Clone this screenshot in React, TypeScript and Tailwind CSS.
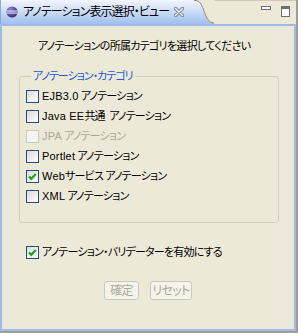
import React from 'react'

const font = "font-['Liberation_Sans','Noto_Sans_CJK_JP',sans-serif] [font-feature-settings:'palt']"

const Check = ({ checked = false, disabled = false }: { checked?: boolean; disabled?: boolean }) => (
  <span
    className={
      disabled
        ? 'w-[13px] h-[13px] shrink-0 border border-[#cac8bb] bg-[#f5f4ee]'
        : 'w-[13px] h-[13px] shrink-0 border border-[#1c5180] bg-linear-to-br from-[#dcdbd5] to-white flex items-center justify-center'
    }
  >
    {checked && (
      <svg width="11" height="11" viewBox="0 0 11 11">
        <path d="M2 5.5 L4.2 7.8 L8.8 3" fill="none" stroke="#21a121" strokeWidth="2.2" />
      </svg>
    )}
  </span>
)

const Row = ({ latin, label, checked, disabled }: { latin?: string; label: string; checked?: boolean; disabled?: boolean }) => (
  <div className="flex items-center h-[20px] gap-[3px]">
    <Check checked={checked} disabled={disabled} />
    <span className={disabled ? 'text-[#aca899] whitespace-pre' : 'text-black whitespace-pre'}>
      {latin && <span className="tracking-[0.2px]">{latin}</span>}
      <span className="tracking-[-0.8px]">{label}</span>
    </span>
  </div>
)

const categories = [
  { latin: 'EJB3.0', label: ' アノテーション' },
  { latin: 'Java EE', label: '共通  アノテーション' },
  { latin: 'JPA', label: ' アノテーション', disabled: true },
  { latin: 'Portlet', label: ' アノテーション' },
  { latin: 'Web', label: 'サービス アノテーション', checked: true },
  { latin: 'XML', label: ' アノテーション' },
]

export default function App() {
  return (
    <div className={`w-[298px] h-[333px] pr-[2px] pb-[2px] bg-[#9f9d90] text-[11px] leading-[14px] tracking-[-0.7px] ${font}`}>
      <div className="flex flex-col h-full bg-[#ece9d8]">
        {/* view tab header */}
        <div className="flex h-[24px] shrink-0">
          <div className="flex items-center w-[194px] pl-[5px] pr-[10px] bg-linear-to-b from-[#f3f6fc] to-[#a2bfee] border-l border-[#8fa9d6]">
            <svg width="12" height="12" viewBox="0 0 12 12" className="shrink-0">
              <defs>
                <radialGradient id="ecl" cx="0.35" cy="0.3" r="0.8">
                  <stop offset="0" stopColor="#8f87d8" />
                  <stop offset="1" stopColor="#2c2672" />
                </radialGradient>
              </defs>
              <circle cx="6" cy="6" r="5.6" fill="url(#ecl)" />
              <rect x="0.5" y="4.6" width="11" height="1" fill="#e8e6f6" />
              <rect x="0.5" y="6.6" width="11" height="1" fill="#e8e6f6" />
            </svg>
            <span className="ml-[5px] text-[12px] tracking-[-0.9px] text-black whitespace-nowrap">アノテーション表示選択・ビュー</span>
            <svg width="10" height="10" viewBox="0 0 10 10" className="ml-auto shrink-0">
              <path d="M1.5 1.5 L8.5 8.5 M8.5 1.5 L1.5 8.5" stroke="#7a869e" strokeWidth="3.4" strokeLinecap="round" />
              <path d="M1.5 1.5 L8.5 8.5 M8.5 1.5 L1.5 8.5" stroke="#f4f6fb" strokeWidth="1.4" strokeLinecap="round" />
            </svg>
          </div>
          <svg width="20" height="24" viewBox="0 0 20 24" className="shrink-0">
            <defs>
              <linearGradient id="tabg" x1="0" y1="0" x2="0" y2="1">
                <stop offset="0" stopColor="#f3f6fc" />
                <stop offset="1" stopColor="#a2bfee" />
              </linearGradient>
            </defs>
            <path d="M0 0 L2 0 C11 0 9 23 20 23 L20 24 L0 24 Z" fill="url(#tabg)" />
            <path d="M0 0.5 L2 0.5 C11 0.5 9 23 20 23" fill="none" stroke="#8a8a80" strokeWidth="1" />
          </svg>
          <div className="flex-1 flex items-start justify-end pt-[5px] pr-[6px] gap-[10px] border-t border-[#cfcbb8]">
            <div className="w-[10px] h-[4px] border border-[#6f6f6f] bg-white" />
            <div className="w-[9px] h-[11px] border border-[#6f6f6f] border-t-[3px] bg-white" />
          </div>
        </div>
        <div className="h-[2px] shrink-0 bg-[#9dbbec]" />

        {/* body */}
        <div className="flex-1 flex flex-col border-l-2 border-r-2 border-b-2 border-[#9dbbec] text-black">
          <div className="pt-[13px] pl-[36px]">アノテーションの所属カテゴリを選択してください</div>

          <fieldset className="mt-[16px] ml-[17px] w-[260px] border border-[#d0cdbd] rounded-[3px] pl-[6px] pt-[3px] pb-[16px]">
            <legend className="ml-[5px] px-[2px] tracking-[-1px] text-[#1f55d6]">アノテーション・カテゴリ</legend>
            {categories.map((c) => (
              <Row key={c.latin} latin={c.latin} label={c.label} checked={c.checked} disabled={c.disabled} />
            ))}
          </fieldset>

          <div className="mt-[19px] pl-[24px]">
            <Row label="アノテーション・バリデーターを有効にする" checked />
          </div>

          <div className="mt-[19px] flex justify-center gap-[11px]">
            <button className="w-[35px] h-[19px] border border-[#cac8bb] rounded-[3px] bg-[#f4f3ec] text-[12px] text-[#aca899]">確定</button>
            <button className="w-[42px] h-[19px] border border-[#cac8bb] rounded-[3px] bg-[#f4f3ec] text-[12px] text-[#aca899]">リセット</button>
          </div>
        </div>
      </div>
    </div>
  )
}
